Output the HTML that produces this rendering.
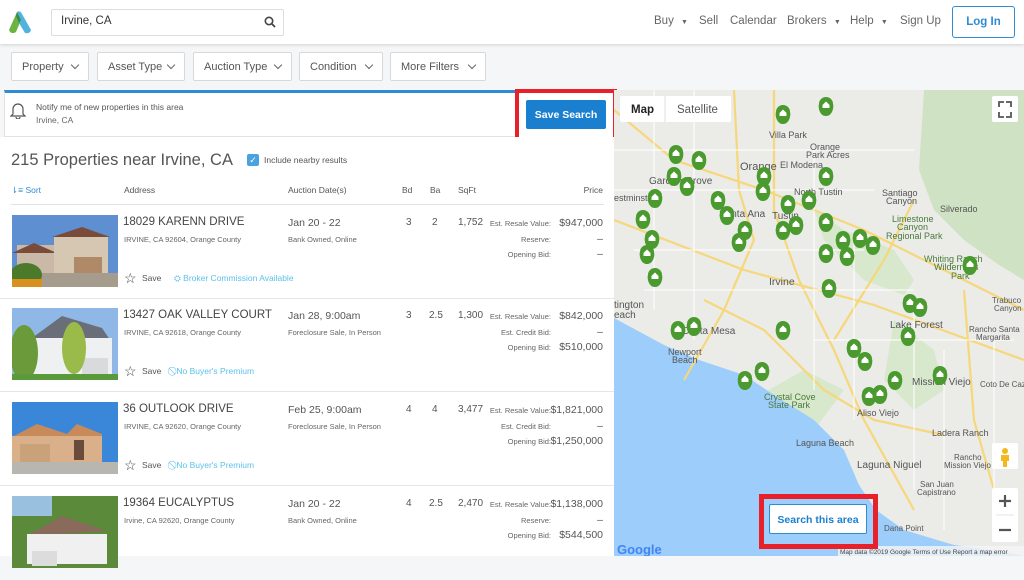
<!DOCTYPE html>
<html><head><meta charset="utf-8"><style>
*{margin:0;padding:0;box-sizing:border-box}
body{width:1024px;height:556px;overflow:hidden;background:#f5f6f7;font-family:"Liberation Sans",sans-serif;color:#4a4a4a;position:relative}
.a{position:absolute;white-space:nowrap}
.hdr{position:absolute;left:0;top:0;width:1024px;height:44px;background:#fff;box-shadow:0 1px 3px rgba(0,0,0,.15)}
.nav{font-size:11.5px;color:#666;top:15px}
.fb{position:absolute;top:52px;height:29px;background:#fff;border:1px solid #d8d8d8;border-radius:2px;font-size:11px;color:#555;padding:8px 0 0 10px}
.fb:after{content:"";position:absolute;right:10px;top:9px;width:5px;height:5px;border-right:1.3px solid #666;border-bottom:1.3px solid #666;transform:rotate(45deg)}
.list{position:absolute;left:0;top:137px;width:614px;height:419px;background:#fff}
.row{position:absolute;left:0;width:614px;height:94px;border-bottom:1px solid #e6e6e6}
.img{position:absolute;left:12px;top:10px;width:106px;height:72px}
.ad{left:123px;top:11px;font-size:11.5px;color:#444}
.sb{font-size:7.5px;color:#666}
.dt{left:288px;top:12px;font-size:10.5px;color:#555}
.n{top:12px;font-size:10px;color:#555}
.lb{right:63px;font-size:7.5px;color:#666;text-align:right}
.pr{right:11px;font-size:10.5px;color:#555;text-align:right}
.sv{left:142px;top:68px;font-size:8.5px;color:#555}
.bd{top:68px;font-size:8.5px;color:#5bc0eb}
</style></head><body>
<div class="hdr">
<svg class="a" style="left:8px;top:10px" width="24" height="25" viewBox="0 0 24 25"><path d="M9 2 L1 20 Q3 25 8 22 L13 10Z" fill="#6cb33f"/><path d="M9 2 Q12 0 14 4 L23 20 Q22 24 17 23 L11 13Z" fill="#4fb3dd"/><path d="M9 2 L13 10 L11 13 L8 6Z" fill="#3a8c4a"/></svg>
<div class="a" style="left:51px;top:9px;width:233px;height:27px;border:1px solid #ddd;border-radius:2px"></div>
<div class="a" style="left:61px;top:15px;font-size:11.5px;color:#333">Irvine, CA</div>
<svg class="a" style="left:264px;top:16px" width="12" height="12" viewBox="0 0 12 12"><circle cx="5" cy="5" r="3.7" fill="none" stroke="#444" stroke-width="1.6"/><path d="M7.8 7.8L11 11" stroke="#444" stroke-width="1.8"/></svg>
<div class="a nav" style="left:654px">Buy <span style="font-size:7px;margin-left:4px">▼</span></div>
<div class="a nav" style="left:699px">Sell</div>
<div class="a nav" style="left:730px">Calendar</div>
<div class="a nav" style="left:787px">Brokers <span style="font-size:7px;margin-left:4px">▼</span></div>
<div class="a nav" style="left:850px">Help <span style="font-size:7px;margin-left:4px">▼</span></div>
<div class="a nav" style="left:900px">Sign Up</div>
<div class="a" style="left:952px;top:6px;width:63px;height:32px;border:1px solid #2e8bd4;border-radius:3px;color:#2e8bd4;font-size:11.5px;font-weight:bold;text-align:center;padding-top:9px">Log In</div>
</div>
<div class="fb" style="left:11px;width:78px">Property</div>
<div class="fb" style="left:97px;width:88px">Asset Type</div>
<div class="fb" style="left:193px;width:99px">Auction Type</div>
<div class="fb" style="left:299px;width:84px">Condition</div>
<div class="fb" style="left:390px;width:96px">More Filters</div>
<div class="a" style="left:4px;top:90px;width:610px;height:47px;background:#fff;border:1px solid #e2e2e2;border-top:3px solid #2e8bd4"></div>
<svg class="a" style="left:10px;top:101px" width="16" height="18" viewBox="0 0 16 18"><path d="M3 13V8a5 5 0 0 1 10 0v5l2 2H1z" fill="none" stroke="#555" stroke-width="1.2"/><path d="M6 16a2 2 0 0 0 4 0" fill="none" stroke="#555" stroke-width="1.2"/></svg>
<div class="a" style="left:36px;top:102px;font-size:8.5px;color:#555">Notify me of new properties in this area</div>
<div class="a" style="left:36px;top:115px;font-size:8.5px;color:#666">Irvine, CA</div>
<div class="a" style="left:515px;top:89px;width:102px;height:55px;border:4px solid #e8202a;background:#fff"></div>
<div class="a" style="left:526px;top:100px;width:80px;height:29px;background:#1a7fcf;border-radius:2px;color:#fff;font-size:10.5px;font-weight:bold;text-align:center;padding-top:9px">Save Search</div>
<div class="list">
<div class="a" style="left:11px;top:14px;font-size:16.5px;color:#555">215 Properties near Irvine, CA</div>
<div class="a" style="left:247px;top:17px;width:12px;height:12px;background:#4aa3df;border-radius:2px;color:#fff;font-size:9px;text-align:center;line-height:12px">✓</div>
<div class="a" style="left:264px;top:18px;font-size:8.5px;color:#555">Include nearby results</div>
<div class="a" style="left:11px;top:48px;font-size:8.5px;color:#2e8bd4">⇂≡ Sort</div>
<div class="a" style="left:124px;top:48px;font-size:8.5px;color:#555">Address</div>
<div class="a" style="left:288px;top:48px;font-size:8.5px;color:#555">Auction Date(s)</div>
<div class="a" style="left:402px;top:48px;font-size:8.5px;color:#555">Bd</div>
<div class="a" style="left:430px;top:48px;font-size:8.5px;color:#555">Ba</div>
<div class="a" style="left:458px;top:48px;font-size:8.5px;color:#555">SqFt</div>
<div class="a" style="right:11px;top:48px;font-size:8.5px;color:#555">Price</div>
<div class="a" style="left:11px;top:67px;width:593px;border-top:1px solid #e3e3e3"></div>
</div>

<div class="row" style="top:205px">
<svg class="img" viewBox="0 0 106 72"><rect width="106" height="72" fill="#5e8fd0"/><rect x="5" y="30" width="90" height="42" fill="#c9b9a6"/><polygon points="0,38 22,28 45,38" fill="#7a4a3a"/><polygon points="40,22 70,12 98,22" fill="#7a4a3a"/><rect x="42" y="22" width="54" height="40" fill="#d6c7b3"/><rect x="62" y="42" width="28" height="18" fill="#b08a68"/><rect x="0" y="58" width="106" height="14" fill="#a59c8e"/><ellipse cx="14" cy="60" rx="16" ry="12" fill="#4a7a2a"/><rect x="0" y="64" width="30" height="8" fill="#d89020"/></svg>
<div class="a ad">18029 KARENN DRIVE</div><div class="a sb" style="left:124px;top:30px">IRVINE, CA 92604, Orange County</div>
<div class="a dt">Jan 20 - 22</div><div class="a sb" style="left:288px;top:30px">Bank Owned, Online</div>
<div class="a n" style="left:406px">3</div><div class="a n" style="left:432px">2</div><div class="a n" style="left:458px">1,752</div>
<div class="a lb" style="top:14px">Est. Resale Value:</div><div class="a pr" style="top:12px">$947,000</div>
<div class="a lb" style="top:30px">Reserve:</div><div class="a pr" style="top:28px">–</div>
<div class="a lb" style="top:45px">Opening Bid:</div><div class="a pr" style="top:43px">–</div>
<div class="a" style="left:124px;top:65px;font-size:14px;color:#444">☆</div><div class="a sv">Save</div>
<div class="a bd" style="left:174px">⛭ Broker Commission Available</div>
</div>
<div class="row" style="top:298px">
<svg class="img" viewBox="0 0 106 72"><rect width="106" height="72" fill="#8fb8e6"/><polygon points="20,30 50,8 90,20 100,35" fill="#6a6e78"/><rect x="20" y="30" width="80" height="38" fill="#eef0f2"/><rect x="70" y="50" width="26" height="18" fill="#d8dadc"/><ellipse cx="12" cy="45" rx="14" ry="28" fill="#6a9a3a"/><ellipse cx="62" cy="40" rx="12" ry="26" fill="#9abb4a"/><rect x="0" y="66" width="106" height="6" fill="#5a9a3a"/></svg>
<div class="a ad">13427 OAK VALLEY COURT</div><div class="a sb" style="left:124px;top:30px">IRVINE, CA 92618, Orange County</div>
<div class="a dt">Jan 28, 9:00am</div><div class="a sb" style="left:288px;top:30px">Foreclosure Sale, In Person</div>
<div class="a n" style="left:406px">3</div><div class="a n" style="left:429px">2.5</div><div class="a n" style="left:458px">1,300</div>
<div class="a lb" style="top:14px">Est. Resale Value:</div><div class="a pr" style="top:12px">$842,000</div>
<div class="a lb" style="top:30px">Est. Credit Bid:</div><div class="a pr" style="top:28px">–</div>
<div class="a lb" style="top:45px">Opening Bid:</div><div class="a pr" style="top:43px">$510,000</div>
<div class="a" style="left:124px;top:65px;font-size:14px;color:#444">☆</div><div class="a sv">Save</div>
<div class="a bd" style="left:174px">⃠ No Buyer's Premium</div>
</div>
<div class="row" style="top:392px">
<svg class="img" viewBox="0 0 106 72"><rect width="106" height="72" fill="#3a86d8"/><polygon points="0,35 25,22 55,32 65,22 90,32 90,45 0,45" fill="#c98a5a"/><rect x="0" y="34" width="90" height="26" fill="#d9b08a"/><rect x="8" y="42" width="30" height="18" fill="#caa27a"/><rect x="62" y="38" width="10" height="20" fill="#6a4a3a"/><rect x="0" y="60" width="106" height="12" fill="#b8b6b0"/></svg>
<div class="a ad">36 OUTLOOK DRIVE</div><div class="a sb" style="left:124px;top:30px">IRVINE, CA 92620, Orange County</div>
<div class="a dt">Feb 25, 9:00am</div><div class="a sb" style="left:288px;top:30px">Foreclosure Sale, In Person</div>
<div class="a n" style="left:406px">4</div><div class="a n" style="left:432px">4</div><div class="a n" style="left:458px">3,477</div>
<div class="a lb" style="top:14px">Est. Resale Value:</div><div class="a pr" style="top:12px">$1,821,000</div>
<div class="a lb" style="top:30px">Est. Credit Bid:</div><div class="a pr" style="top:28px">–</div>
<div class="a lb" style="top:45px">Opening Bid:</div><div class="a pr" style="top:43px">$1,250,000</div>
<div class="a" style="left:124px;top:65px;font-size:14px;color:#444">☆</div><div class="a sv">Save</div>
<div class="a bd" style="left:174px">⃠ No Buyer's Premium</div>
</div>
<div class="row" style="top:486px;border:none">
<svg class="img" viewBox="0 0 106 72"><rect width="106" height="72" fill="#5a8a3a"/><rect x="0" y="0" width="40" height="20" fill="#9ac0e0"/><polygon points="15,40 50,20 95,35" fill="#8a6a5a"/><rect x="15" y="38" width="80" height="30" fill="#f0f0f0"/><rect x="20" y="55" width="25" height="15" fill="#dcdcdc"/></svg>
<div class="a ad">19364 EUCALYPTUS</div><div class="a sb" style="left:124px;top:30px">Irvine, CA 92620, Orange County</div>
<div class="a dt">Jan 20 - 22</div><div class="a sb" style="left:288px;top:30px">Bank Owned, Online</div>
<div class="a n" style="left:406px">4</div><div class="a n" style="left:429px">2.5</div><div class="a n" style="left:458px">2,470</div>
<div class="a lb" style="top:14px">Est. Resale Value:</div><div class="a pr" style="top:12px">$1,138,000</div>
<div class="a lb" style="top:30px">Reserve:</div><div class="a pr" style="top:28px">–</div>
<div class="a lb" style="top:45px">Opening Bid:</div><div class="a pr" style="top:43px">$544,500</div>
</div>

<svg class="a" style="left:614px;top:90px" width="410" height="466" viewBox="0 0 410 466">
<defs><g id="p"><path d="M0 9 C-7 9 -8 -1 -7 -3 A7 7 0 1 1 7 -3 C8 -1 7 9 0 9Z" transform="translate(0,-9)" fill="#4b9a2f"/><path d="M-3.5 -11 L0 -14.5 L3.5 -11 V-8 H-3.5Z" fill="#fff"/></g></defs>
<rect width="410" height="466" fill="#ebebe8"/>
<path d="M310 0 H410 V190 L385 175 L350 150 L320 120 L305 80 Z" fill="#cfe3c4"/>
<path d="M200 120 L230 140 L280 160 L300 190 L290 205 L250 190 L210 150Z" fill="#d7e8cc"/>
<path d="M280 230 L320 260 L330 300 L300 320 L270 290Z" fill="#d7e8cc"/>
<path d="M120 320 L200 340 L230 300 L190 280Z" fill="#d7e8cc"/>
<path d="M0 228 L50 255 L85 270 L130 285 L160 305 L200 330 L230 360 L245 395 L262 420 L290 440 L340 455 L390 462 L410 466 V466 H0Z" fill="#9ccdfb"/>
<g fill="none" stroke="#f6d77a" stroke-width="2.2">
<path d="M0 130 L130 180 L260 215 L410 270"/><path d="M120 0 L125 100 L140 150 L110 220 L70 290"/><path d="M160 0 L160 120 L185 190 L220 260 L250 330 L300 420"/><path d="M300 110 L270 170 L220 250"/><path d="M0 20 L60 70 L150 100 L250 140 L330 180 L410 220"/><path d="M90 210 L150 240 L210 300 L260 330 L330 345"/><path d="M350 200 L360 330 L380 400"/></g>
<g fill="none" stroke="#fff" stroke-width="1">
<path d="M0 60 H300 M0 100 H260 M20 160 H250 M30 200 H300 M200 250 H400 M40 0 V220 M80 0 V250 M200 60 V300 M240 150 V330 M300 220 V400 M330 260 V440 M380 250 V400"/></g>
<g font-family="Liberation Sans,sans-serif" fill="#555" font-size="9">
<text x="155" y="48">Villa Park</text><text x="196" y="60">Orange</text><text x="192" y="68">Park Acres</text><text x="126" y="80" font-size="11">Orange</text><text x="166" y="78">El Modena</text><text x="35" y="94" font-size="10">Garden Grove</text><text x="0" y="111">estminster</text><text x="180" y="105">North Tustin</text><text x="105" y="127" font-size="10">Santa Ana</text><text x="158" y="129" font-size="10">Tustin</text><text x="268" y="106">Santiago</text><text x="272" y="114">Canyon</text><text x="326" y="122">Silverado</text><text x="278" y="132" fill="#4a7a3a">Limestone</text><text x="283" y="140" fill="#4a7a3a">Canyon</text><text x="272" y="149" fill="#4a7a3a">Regional Park</text><text x="310" y="172" fill="#4a7a3a">Whiting Ranch</text><text x="320" y="180" fill="#4a7a3a">Wilderness</text><text x="337" y="189" fill="#4a7a3a">Park</text><text x="155" y="195" font-size="10.5">Irvine</text><text x="0" y="218" font-size="10">tington</text><text x="0" y="228" font-size="10">each</text><text x="276" y="238" font-size="10">Lake Forest</text><text x="355" y="242" font-size="8">Rancho Santa</text><text x="362" y="250" font-size="8">Margarita</text><text x="378" y="213" font-size="8">Trabuco</text><text x="380" y="221" font-size="8">Canyon</text><text x="68" y="244" font-size="10">Costa Mesa</text><text x="54" y="265">Newport</text><text x="58" y="273">Beach</text><text x="150" y="310" fill="#4a7a3a">Crystal Cove</text><text x="154" y="318" fill="#4a7a3a">State Park</text><text x="243" y="326">Aliso Viejo</text><text x="298" y="295" font-size="10">Mission Viejo</text><text x="366" y="297" font-size="8">Coto De Caza</text><text x="318" y="346">Ladera Ranch</text><text x="182" y="356">Laguna Beach</text><text x="243" y="378" font-size="10">Laguna Niguel</text><text x="340" y="370" font-size="8">Rancho</text><text x="330" y="378" font-size="8">Mission Viejo</text><text x="306" y="397" font-size="8">San Juan</text><text x="303" y="405" font-size="8">Capistrano</text><text x="270" y="441" font-size="8">Dana Point</text>
</g>
<g transform="translate(0,8)">
<use href="#p" x="169" y="26"/><use href="#p" x="212" y="18"/><use href="#p" x="62" y="66"/><use href="#p" x="85" y="72"/><use href="#p" x="60" y="88"/><use href="#p" x="73" y="98"/><use href="#p" x="41" y="110"/><use href="#p" x="150" y="88"/><use href="#p" x="149" y="103"/><use href="#p" x="212" y="88"/><use href="#p" x="195" y="112"/><use href="#p" x="174" y="116"/><use href="#p" x="104" y="112"/><use href="#p" x="113" y="127"/><use href="#p" x="29" y="131"/><use href="#p" x="38" y="151"/><use href="#p" x="33" y="166"/><use href="#p" x="41" y="189"/><use href="#p" x="131" y="142"/><use href="#p" x="125" y="154"/><use href="#p" x="182" y="137"/><use href="#p" x="169" y="142"/><use href="#p" x="212" y="134"/><use href="#p" x="229" y="152"/><use href="#p" x="246" y="150"/><use href="#p" x="259" y="157"/><use href="#p" x="212" y="165"/><use href="#p" x="233" y="168"/><use href="#p" x="356" y="177"/><use href="#p" x="215" y="200"/><use href="#p" x="296" y="215"/><use href="#p" x="306" y="219"/><use href="#p" x="294" y="248"/><use href="#p" x="64" y="242"/><use href="#p" x="80" y="238"/><use href="#p" x="169" y="242"/><use href="#p" x="148" y="283"/><use href="#p" x="131" y="292"/><use href="#p" x="240" y="260"/><use href="#p" x="251" y="273"/><use href="#p" x="281" y="292"/><use href="#p" x="255" y="308"/><use href="#p" x="266" y="306"/><use href="#p" x="326" y="287"/>
</g>
<rect x="6" y="6" width="111" height="26" fill="#fff" rx="2"/><text x="17" y="23" font-family="Liberation Sans,sans-serif" font-size="11.5" font-weight="bold" fill="#222">Map</text><text x="63" y="23" font-family="Liberation Sans,sans-serif" font-size="11.5" fill="#555">Satellite</text><line x1="51" y1="6" x2="51" y2="32" stroke="#e0e0e0"/>
<rect x="378" y="6" width="26" height="26" fill="#fff" rx="2"/><path d="M385 17v-5h5M392 12h5v5M397 22v5h-5M390 27h-5v-5" fill="none" stroke="#555" stroke-width="1.8"/>
<rect x="378" y="353" width="26" height="26" fill="#fff" rx="2"/><circle cx="391" cy="361" r="3" fill="#f5b81c"/><path d="M387 365h8v6h-2v6h-4v-6h-2z" fill="#f5b81c"/>
<rect x="378" y="398" width="26" height="54" fill="#fff" rx="2"/><path d="M385 411h12M391 405v12M385 440h12" stroke="#555" stroke-width="2.2"/><line x1="382" y1="425" x2="400" y2="425" stroke="#e6e6e6"/>
<text x="3" y="464" font-family="Liberation Sans,sans-serif" font-size="13" font-weight="bold" fill="#4285f4">Google</text>
<rect x="224" y="456" width="186" height="10" fill="rgba(245,245,245,.8)"/><text x="226" y="464" font-family="Liberation Sans,sans-serif" font-size="6.5" fill="#444">Map data ©2019 Google   Terms of Use   Report a map error</text>
</svg>
<div class="a" style="left:759px;top:494px;width:119px;height:55px;border:5px solid #e8202a"></div>
<div class="a" style="left:769px;top:504px;width:98px;height:30px;background:#fff;border:1px solid #2e8bd4;border-radius:2px;color:#1a7fcf;font-size:10.5px;font-weight:bold;text-align:center;padding-top:9px">Search this area</div>
</body></html>
